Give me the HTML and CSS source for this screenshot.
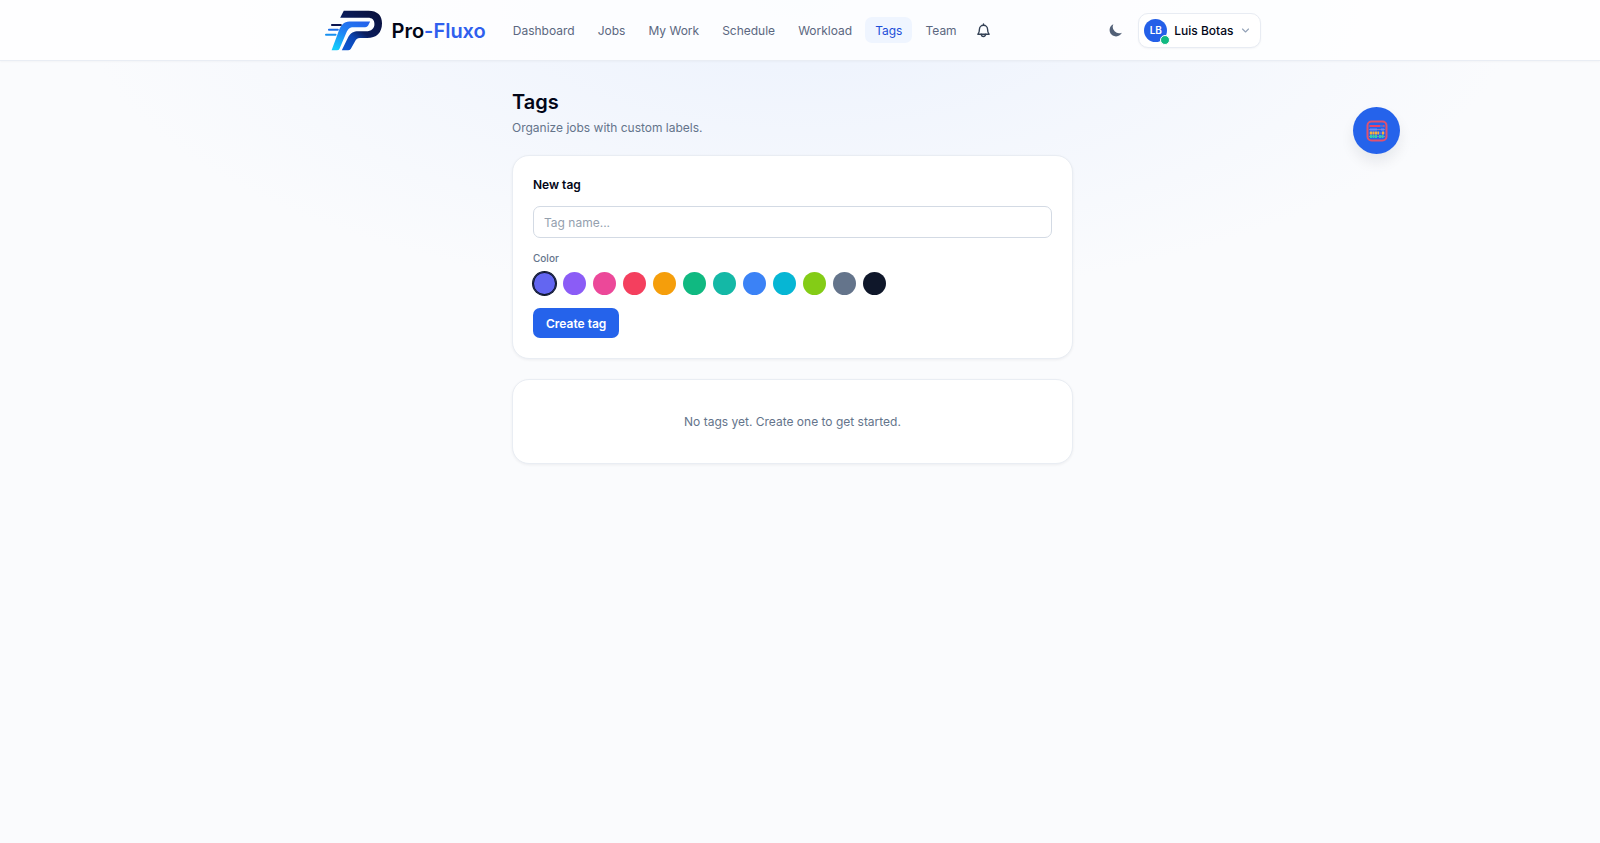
FILE: index.html
```html
<!DOCTYPE html>
<html lang="en">
<head>
  <meta charset="UTF-8">
  <title>Tags - Pro-Fluxo</title>
  <meta name="viewport" content="width=device-width, initial-scale=1.0">
  <link rel="stylesheet" href="styles.css">
</head>
<body>
  <header class="topbar">
    <div class="topbar-inner">
      <a href="#" class="brand">
        <svg class="brand-logo" viewBox="44 28 176 124" aria-hidden="true">
          <defs>
            <linearGradient id="logo-dark" x1="1" y1="0" x2="0.2" y2="1">
              <stop offset="0" stop-color="#0b1038"/>
              <stop offset="0.55" stop-color="#0a1c5c"/>
              <stop offset="0.75" stop-color="#0d46b4"/>
              <stop offset="1" stop-color="#0b55cf"/>
            </linearGradient>
            <linearGradient id="logo-light" x1="0.8" y1="0" x2="0.2" y2="1">
              <stop offset="0" stop-color="#2563eb"/>
              <stop offset="0.5" stop-color="#1f84f5"/>
              <stop offset="1" stop-color="#12ccfb"/>
            </linearGradient>
          </defs>
          <path fill="url(#logo-dark)" d="M101 30H176C203 30 217 44 217 68C217 97 200 113 172 113H150C142 113 138 117 134 125L122 146Q119 150 114 150H95L115 109C122 96 131 92 145 92H168C185 92 194 84 194 70C194 57 187 51 174 51H90Z"/>
          <path fill="url(#logo-light)" d="M118 63H181L175 75Q172 80 166 80H130C119 80 114 85 109 96L88 145Q86 150 80 150H64L84 96C92 74 101 63 118 63Z"/>
          <path d="M65 73H92" stroke="#0b1550" stroke-width="6" stroke-linecap="round"/>
          <path d="M56 88H83" stroke="#1e6fe8" stroke-width="6" stroke-linecap="round"/>
          <path d="M47 103H76" stroke="#1790f0" stroke-width="6" stroke-linecap="round"/>
        </svg>
        <span class="brand-name">Pro<span class="brand-accent">-Fluxo</span></span>
      </a>
      <nav class="nav">
        <a href="#">Dashboard</a>
        <a href="#">Jobs</a>
        <a href="#">My Work</a>
        <a href="#">Schedule</a>
        <a href="#">Workload</a>
        <a href="#" class="active">Tags</a>
        <a href="#">Team</a>
        <button type="button" class="icon-btn" aria-label="Notifications">
          <svg class="bell" viewBox="0 0 24 24" fill="none" stroke="currentColor" stroke-width="2.200" stroke-linecap="round" stroke-linejoin="round">
            <path d="M3 18h18c-2-2-2.500-4-2.500-8a6.500 6.500 0 0 0-13 0c0 4-.5 6-2.500 8z"/>
            <path d="M12 1.500v2M8.500 18a3.500 3.500 0 0 0 7 0"/>
          </svg>
        </button>
      </nav>
      <div class="account">
        <button type="button" class="icon-btn" aria-label="Dark mode">
          <svg class="moon" viewBox="0 0 20 20" fill="currentColor">
            <path d="M17.300 13.300A8 8 0 0 1 6.700 2.700a8 8 0 1 0 10.600 10.600z"/>
          </svg>
        </button>
        <button type="button" class="user-menu">
          <span class="avatar">LB<span class="presence"></span></span>
          <span class="user-name">Luis Botas</span>
          <svg class="chevron" viewBox="0 0 12 12" fill="none" stroke="currentColor" stroke-width="1.500" stroke-linecap="round" stroke-linejoin="round">
            <path d="M2 4l4 4 4-4"/>
          </svg>
        </button>
      </div>
    </div>
  </header>

  <main class="page">
    <h1>Tags</h1>
    <p class="subtitle">Organize jobs with custom labels.</p>

    <form class="card tag-form">
      <label class="form-title" for="tag-name">New tag</label>
      <input class="text-input" type="text" id="tag-name" placeholder="Tag name...">
      <fieldset class="colors">
        <legend>Color</legend>
        <div class="swatches">
          <input type="radio" name="color" class="swatch indigo" aria-label="Indigo" checked>
          <input type="radio" name="color" class="swatch violet" aria-label="Violet">
          <input type="radio" name="color" class="swatch pink" aria-label="Pink">
          <input type="radio" name="color" class="swatch rose" aria-label="Rose">
          <input type="radio" name="color" class="swatch amber" aria-label="Amber">
          <input type="radio" name="color" class="swatch emerald" aria-label="Emerald">
          <input type="radio" name="color" class="swatch teal" aria-label="Teal">
          <input type="radio" name="color" class="swatch blue" aria-label="Blue">
          <input type="radio" name="color" class="swatch cyan" aria-label="Cyan">
          <input type="radio" name="color" class="swatch lime" aria-label="Lime">
          <input type="radio" name="color" class="swatch slate" aria-label="Slate">
          <input type="radio" name="color" class="swatch navy" aria-label="Navy">
        </div>
      </fieldset>
      <button type="button" class="btn-primary">Create tag</button>
    </form>

    <section class="card empty">No tags yet. Create one to get started.</section>
  </main>

  <button type="button" class="fab" aria-label="Calculator">
    <svg viewBox="0 0 22 22" fill="none">
      <rect x="1.500" y="1.500" width="19" height="19" rx="4" stroke="#e0526e" stroke-width="2"/>
      <path d="M3 6h16M3 9.500h16M3 13h16M3 16.500h16" stroke="#8b7bb8" stroke-width="1"/>
      <path d="M4 6h10M17 6h1" stroke="#ee4266" stroke-width="2"/>
      <path d="M4 9.500h7M15 9.500h3" stroke="#6c8cf5" stroke-width="2"/>
      <path d="M4 13h9M16 13h2" stroke="#fbb03b" stroke-width="3" stroke-dasharray="2 .5"/>
      <path d="M4 16.500h7M13 16.500h5" stroke="#2fcfae" stroke-width="3" stroke-dasharray="2 .5"/>
    </svg>
  </button>
</body>
</html>
```
FILE: styles.css
```css
* {
  box-sizing: border-box;
}
body {
  margin: 0;
  padding-right: 15px;
  min-height: 100vh;
  font-family: Inter, "Liberation Sans", sans-serif;
  font-size: 12px;
  line-height: 16px;
  color: #020617;
  background: radial-gradient(ellipse 720px 300px at 50% 0, #ecf2fd, #fafbfd) no-repeat #fafbfd;
}
button,
input {
  font: inherit;
  color: inherit;
}
button {
  cursor: pointer;
}
a {
  color: inherit;
  text-decoration: none;
}

/* Header */
.topbar {
  margin-right: -15px;
  padding-right: 15px;
  background: rgba(255, 255, 255, 0.8);
  border-bottom: 1px solid #e9edf4;
  box-shadow: 0 1px 2px rgba(15, 23, 42, 0.03);
}
.topbar-inner {
  display: flex;
  align-items: center;
  max-width: 936px;
  height: 60px;
  margin: 0 auto;
}
.brand {
  display: flex;
  align-items: center;
  gap: 9px;
  margin-right: 17px;
}
.brand-logo {
  width: 58px;
  height: 41px;
}
.brand-name {
  padding-top: 2px;
  font-size: 20px;
  line-height: 24px;
  font-weight: 600;
}
.brand-accent {
  color: #2f5fee;
}
.nav {
  display: flex;
  align-items: center;
  gap: 3px;
  color: #5b6780;
}
.nav a {
  padding: 6px 10px 4px;
  border-radius: 7px;
}
.nav .active {
  color: #1d4ed8;
  background: #eff5ff;
}
.icon-btn {
  display: flex;
  padding: 8px 6px;
  border: none;
  background: transparent;
  color: #334155;
}
.bell {
  width: 15px;
  height: 15px;
}
.moon {
  width: 16px;
  height: 16px;
  color: #526077;
}
.account {
  display: flex;
  align-items: center;
  gap: 8px;
  margin-left: auto;
}
.user-menu {
  display: flex;
  align-items: center;
  gap: 7px;
  padding: 5px 10px 5px 5px;
  border: 1px solid #e8ecf3;
  border-radius: 10px;
  background: #fff;
  box-shadow: 0 1px 2px rgba(15, 23, 42, 0.04);
  font-weight: 500;
}
.user-name {
  padding-top: 2px;
}
.avatar {
  position: relative;
  display: flex;
  align-items: center;
  justify-content: center;
  width: 23px;
  height: 23px;
  border-radius: 50%;
  background: #2460e8;
  color: #fff;
  font-size: 10px;
  font-weight: 600;
}
.presence {
  position: absolute;
  right: -3px;
  bottom: -3px;
  width: 10px;
  height: 10px;
  border: 1px solid #fff;
  border-radius: 50%;
  background: #10b981;
}
.chevron {
  width: 9px;
  height: 9px;
  color: #94a3b8;
}

/* Page */
.page {
  max-width: 561px;
  margin: 0 auto;
  padding: 27px 0;
}
h1 {
  margin: 0;
  font-size: 20px;
  line-height: 28px;
  font-weight: 600;
}
.subtitle {
  margin: 4px 0 19px;
  color: #64748b;
}
.card {
  border: 1px solid #e9edf3;
  border-radius: 17px;
  background: #fff;
  box-shadow: 0 1px 3px rgba(15, 23, 42, 0.06);
}
.tag-form {
  display: flex;
  flex-direction: column;
  align-items: flex-start;
  padding: 20px;
  margin-bottom: 20px;
}
.form-title {
  margin: 1px 0 13px;
  font-weight: 600;
}
.text-input {
  width: 100%;
  height: 32px;
  padding: 0 10px;
  border: 1px solid #d3dae4;
  border-radius: 7px;
  background: #fff;
}
.text-input::placeholder {
  color: #94a0ae;
}
.colors {
  margin: 12px 0 13px;
  padding: 0;
  border: none;
}
.colors legend {
  padding: 0;
  margin-bottom: 6px;
  font-size: 10px;
  line-height: 16px;
  font-weight: 500;
  color: #64748b;
}
.swatches {
  display: flex;
  flex-wrap: wrap;
  gap: 7px;
}
.swatch {
  appearance: none;
  width: 23px;
  height: 23px;
  margin: 0;
  border-radius: 50%;
  cursor: pointer;
}
.swatch:checked {
  box-shadow: 0 0 0 1px #0f172a, inset 0 0 0 1px #0f172a;
}
.indigo { background: #6366f1; }
.violet { background: #8b5cf6; }
.pink { background: #ec4899; }
.rose { background: #f43f5e; }
.amber { background: #f59e0b; }
.emerald { background: #10b981; }
.teal { background: #14b8a6; }
.blue { background: #3b82f6; }
.cyan { background: #06b6d4; }
.lime { background: #84cc16; }
.slate { background: #64748b; }
.navy { background: #0f172a; }
.btn-primary {
  padding: 8px 13px 6px;
  border: none;
  border-radius: 7px;
  background: #2563eb;
  color: #fff;
  font-weight: 600;
}
.empty {
  padding: 34px 20px 33px;
  text-align: center;
  color: #64748b;
}

/* Floating calculator button */
.fab {
  position: fixed;
  top: 107px;
  right: 200px;
  display: flex;
  align-items: center;
  justify-content: center;
  width: 47px;
  height: 47px;
  padding: 0;
  border: none;
  border-radius: 50%;
  background: #2563eb;
  box-shadow: 0 8px 14px rgba(15, 23, 42, 0.08);
}
.fab svg {
  width: 22px;
  height: 22px;
}
```
